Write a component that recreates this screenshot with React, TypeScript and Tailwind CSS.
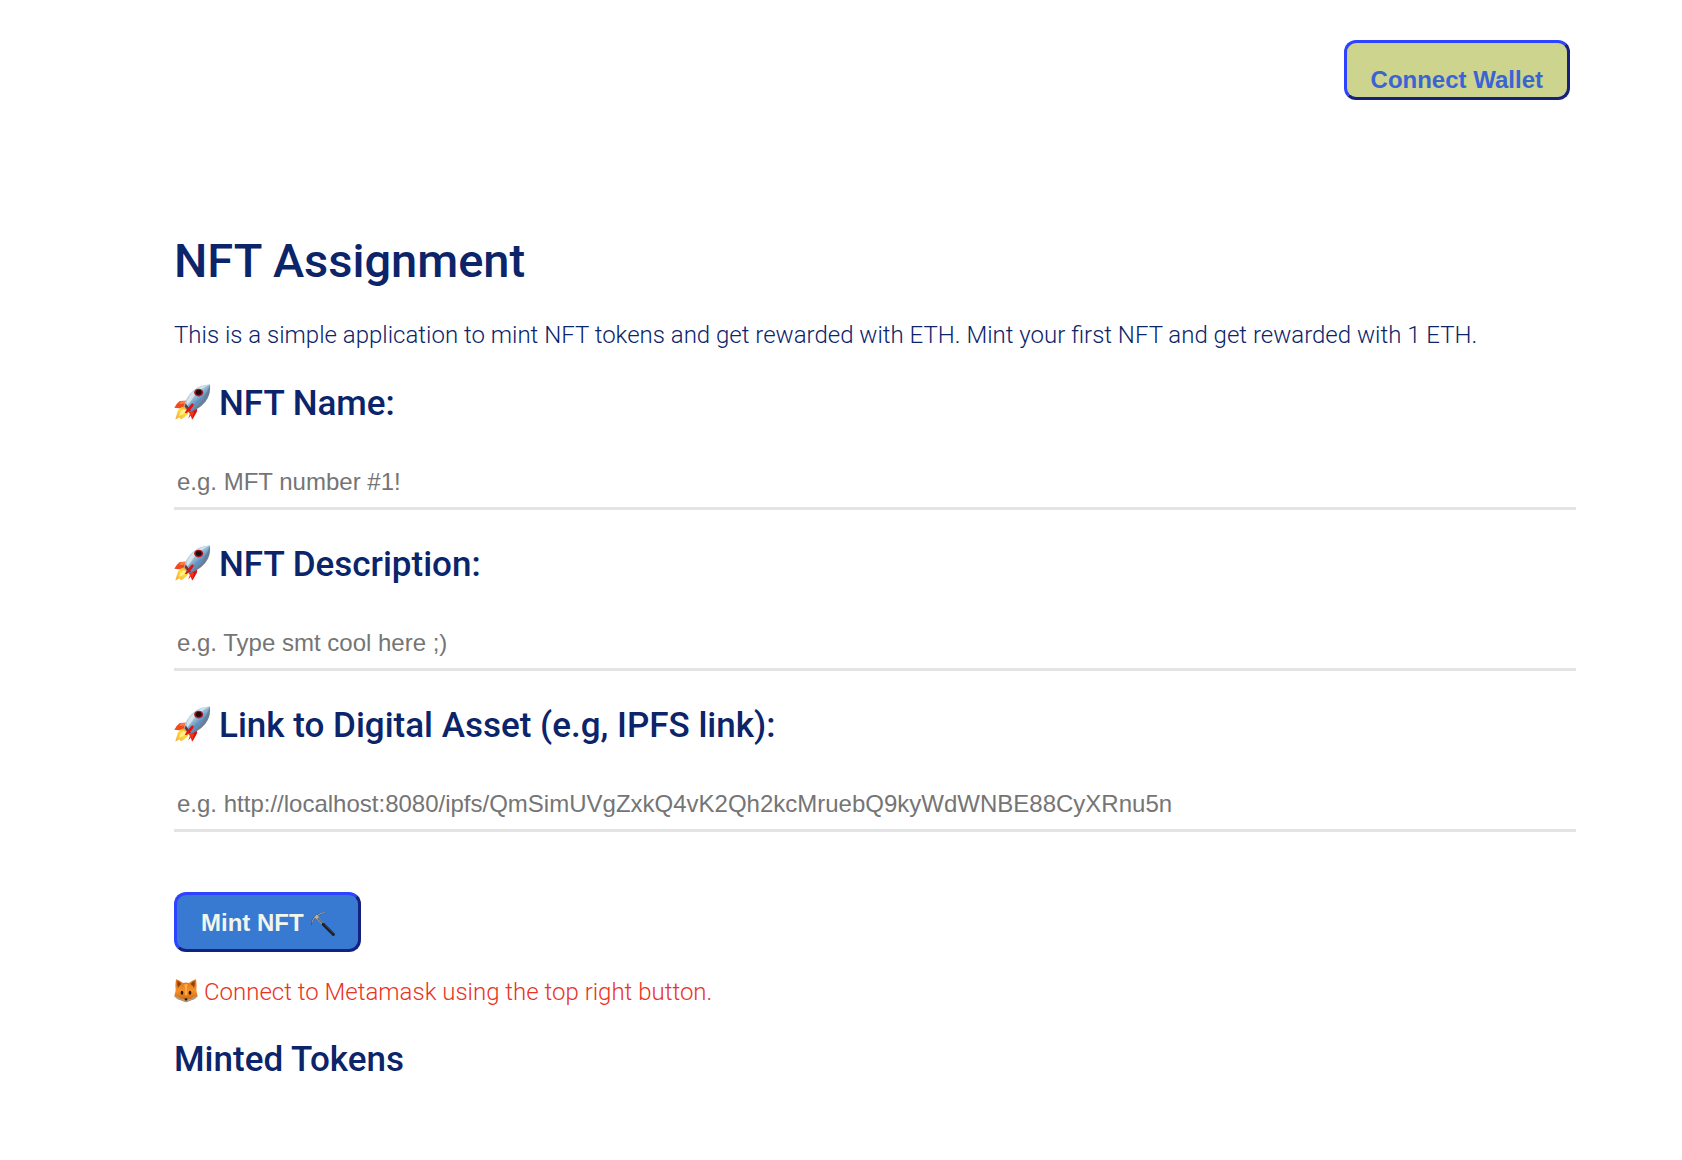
import { useState } from 'react';

function Rocket() {
  return (
    <svg viewBox="40 10 114 110" className="mb-1 h-9 w-[37px] shrink-0" aria-hidden="true">
      <defs>
        <linearGradient id="hull" x1="0.25" y1="0.2" x2="0.75" y2="0.8">
          <stop offset="0" stopColor="#d9e6ea" />
          <stop offset="0.35" stopColor="#9fc3d8" />
          <stop offset="0.65" stopColor="#5b8fc0" />
          <stop offset="1" stopColor="#8d9aa6" />
        </linearGradient>
        <linearGradient id="flame" x1="1" y1="0" x2="0" y2="1">
          <stop offset="0" stopColor="#f08a10" />
          <stop offset="0.45" stopColor="#ffdf3a" />
          <stop offset="1" stopColor="#f5a53a" />
        </linearGradient>
      </defs>
      <path d="M84 60 L58 62 Q48 69 41 83 L70 86 Z" fill="#ee4a1d" />
      <path d="M60 63 L84 61 L76 70 L57 71 Z" fill="#ff7a45" />
      <path d="M108 82 Q114 89 110 96 L97 119 L86 96 Z" fill="#d9110c" />
      <path d="M92 92 L84 116 L94 104 L95 119 L102 96 Z" fill="#f3331c" />
      <path d="M72 78 Q52 82 50 98 L44 119 L58 112 L60 118 Q78 112 87 94 Z" fill="url(#flame)" />
      <path d="M70 86 Q58 94 56 108 Q72 102 79 92 Z" fill="#fff08a" />
      <path d="M71 79 Q75 50 98 30 Q119 11 151 11 Q154 42 136 65 Q115 89 86 97 Z" fill="url(#hull)" />
      <path d="M80 61 Q96 30 124 18 Q134 13 149 12 Q112 28 92 62 L78 80 Z" fill="#eef3f2" opacity="0.65" />
      <path d="M151 11 Q154 42 136 65 Q115 89 86 97 Q114 78 130 56 Q142 37 151 11 Z" fill="#68737f" opacity="0.6" />
      <path d="M73 79 L86 95 L92 91 L76 70 Z" fill="#6e3334" />
      <path d="M96 69 Q88 76 73 98 L79 99 Q96 86 101 73 Z" fill="#e3120e" />
      <ellipse cx="116" cy="36" rx="14" ry="12" fill="#b6161b" />
      <ellipse cx="116" cy="35" rx="9" ry="8" fill="#1e0a12" />
    </svg>
  );
}

function Pickaxe() {
  return (
    <svg viewBox="28 28 78 78" className="h-[26px] w-[26px] shrink-0" aria-hidden="true">
      <path d="M48 50 L97 101" stroke="#8c949c" strokeWidth="7" />
      <path d="M49 50 L80 82" stroke="#4c4f55" strokeWidth="3" />
      <path d="M68 71 L98 101" stroke="#1d2024" strokeWidth="9" strokeLinecap="round" />
      <path d="M72 72 L98 98" stroke="#4a4d52" strokeWidth="2" />
      <path d="M31 75 Q31 55 42 46 Q54 36 75 34 Q72 39 62 41 Q49 45 43 55 Q38 61 31 75 Z" fill="#4b4f57" />
      <path d="M34 66 Q38 54 47 47 Q57 39 73 35 Q58 38 47 45 Q36 53 34 66 Z" fill="#c8ccd0" stroke="#b0b4b8" strokeWidth="1" />
      <rect x="43" y="44" width="10" height="10" fill="#b4b1ad" transform="rotate(45 48 49)" />
    </svg>
  );
}

function Fox() {
  return (
    <svg viewBox="27 28 72 72" className="mb-[2px] h-6 w-6 shrink-0" aria-hidden="true">
      <defs>
        <linearGradient id="fur" x1="0" y1="0" x2="0" y2="1">
          <stop offset="0" stopColor="#d9701b" />
          <stop offset="0.5" stopColor="#f5922a" />
          <stop offset="1" stopColor="#c65a10" />
        </linearGradient>
      </defs>
      <path d="M33 29 Q45 33 54 40 Q63 37 72 40 Q81 33 93 29 Q96 46 94 62 L98 80 Q92 88 80 91 L63 98 L46 91 Q34 88 28 80 L32 62 Q30 46 33 29 Z" fill="url(#fur)" />
      <path d="M37 34 Q45 37 49 43 Q41 49 39 55 Q36 45 37 34 Z M89 34 Q81 37 77 43 Q85 49 87 55 Q90 45 89 34 Z" fill="#8d3f10" />
      <path d="M28 80 Q38 79 48 87 L63 89 L78 87 Q88 79 98 80 Q92 88 80 91 L63 98 L46 91 Q34 88 28 80 Z" fill="#a9a28b" />
      <path d="M58 44 Q63 58 60 77 L66 77 Q63 58 68 44 Z" fill="#ffb04c" />
      <ellipse cx="51" cy="69" rx="4" ry="6" fill="#2c1607" />
      <ellipse cx="75" cy="69" rx="4" ry="6" fill="#2c1607" />
      <path d="M58 88 Q63 84 68 88 L63 94 Z" fill="#1c1410" />
    </svg>
  );
}

type FieldProps = {
  id: string;
  label: string;
  placeholder: string;
};

function Field({ id, label, placeholder }: FieldProps) {
  const [value, setValue] = useState('');
  return (
    <div className="mt-[34px]">
      <h2 className="text-[35px] leading-[42px] font-medium">
        <label htmlFor={id} className="flex items-center gap-2">
          <Rocket />
          {label}
        </label>
      </h2>
      <input
        id={id}
        type="text"
        value={value}
        onChange={(e) => setValue(e.target.value)}
        placeholder={placeholder}
        className="mt-8 block h-[53px] w-full border-b-[3px] border-[#e4e4e4] px-[3px] pb-px font-['Liberation_Sans',sans-serif] text-2xl text-black outline-none placeholder:text-[#757575]"
      />
    </div>
  );
}

const fields: FieldProps[] = [
  { id: 'name', label: 'NFT Name:', placeholder: 'e.g. MFT number #1!' },
  { id: 'description', label: 'NFT Description:', placeholder: 'e.g. Type smt cool here ;)' },
  {
    id: 'asset',
    label: 'Link to Digital Asset (e.g, IPFS link):',
    placeholder: 'e.g. http://localhost:8080/ipfs/QmSimUVgZxkQ4vK2Qh2kcMruebQ9kyWdWNBE88CyXRnu5n',
  },
];

export default function App() {
  return (
    <div className="min-h-screen bg-white pt-10 pr-[106px] pb-10 pl-[174px] font-['Roboto',sans-serif] text-[#0b246a]">
      <header className="flex justify-end pr-[6px]">
        <button
          type="button"
          className="flex h-[60px] items-end rounded-xl border-[3px] border-t-[#2e43ff] border-r-[#16217f] border-b-[#16217f] border-l-[#2e43ff] bg-[#cdd48e] px-6 pb-[3px] font-['Liberation_Sans',sans-serif] text-2xl leading-7 font-bold text-[#3a63d4]"
        >
          Connect Wallet
        </button>
      </header>

      <main className="mt-[132px]">
        <h1 className="text-[47px] leading-[58px] font-medium">NFT Assignment</h1>
        <p className="mt-[31px] text-2xl leading-7 font-light">
          This is a simple application to mint NFT tokens and get rewarded with ETH. Mint your first NFT and get
          rewarded with 1 ETH.
        </p>

        <form onSubmit={(e) => e.preventDefault()}>
          {fields.map((f) => (
            <Field key={f.id} {...f} />
          ))}
          <button
            type="submit"
            className="mt-[60px] flex h-[60px] items-center gap-[6px] rounded-xl border-[3px] border-t-[#2e43ff] border-r-[#16217f] border-b-[#16217f] border-l-[#2e43ff] bg-[#387ad1] pt-[2px] pr-[22px] pl-6 font-['Liberation_Sans',sans-serif] text-2xl leading-7 font-bold text-[#f2f5ec]"
          >
            Mint NFT
            <Pickaxe />
          </button>
        </form>

        <p className="mt-[26px] flex items-center gap-[6px] text-2xl leading-7 font-light text-[#ea3323]">
          <Fox />
          Connect to Metamask using the top right button.
        </p>
        <h2 className="mt-[33px] text-[35px] leading-[42px] font-medium">Minted Tokens</h2>
      </main>
    </div>
  );
}
